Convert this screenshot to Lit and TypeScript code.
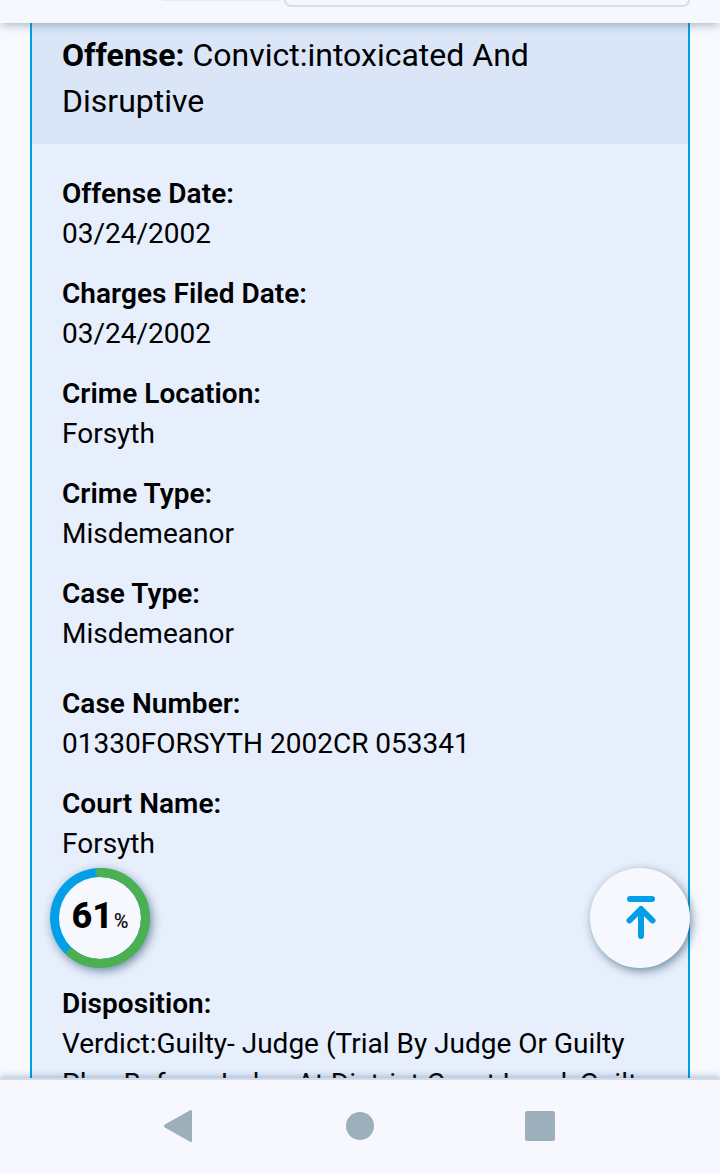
import { LitElement, html, css } from "lit";
import { customElement } from "lit/decorators.js";

interface Field {
  label: string;
  value: string;
  spacing?: "wide" | "section";
}

const FIELDS: Field[] = [
  { label: "Offense Date:", value: "03/24/2002" },
  { label: "Charges Filed Date:", value: "03/24/2002" },
  { label: "Crime Location:", value: "Forsyth" },
  { label: "Crime Type:", value: "Misdemeanor" },
  { label: "Case Type:", value: "Misdemeanor" },
  { label: "Case Number:", value: "01330FORSYTH 2002CR 053341", spacing: "wide" },
  { label: "Court Name:", value: "Forsyth" },
  {
    label: "Disposition:",
    value: "Verdict:Guilty- Judge (Trial By Judge Or Guilty Plea Before Judge At District Court Level, Guilty",
    spacing: "section",
  },
];

@customElement("offense-record")
class OffenseRecord extends LitElement {
  static styles = css`
    :host { display: block; margin: 0 30px; border: solid #009fe8; border-width: 0 2px; background: #e7eefc; color: #000; box-sizing: border-box; }
    .offense { background: #dae6f7; padding: 9px 120px 20px 30px; font-size: 32px; line-height: 46px; font-weight: 400; }
    .offense b { font-weight: 700; }
    .fields { padding: 30px 30px 0; display: flex; flex-direction: column; gap: 20px; font-size: 28px; line-height: 40px; }
    .wide { margin-top: 10px; }
    .section { margin-top: 100px; }
    .label { font-weight: 600; letter-spacing: 0.04px; }
    .value { font-weight: 400; }
  `;
  render() {
    return html`
      <div class="offense"><b>Offense:</b> Convict:intoxicated And Disruptive</div>
      <div class="fields">
        ${FIELDS.map(
          (f) => html`<div class=${f.spacing ?? "field"}>
            <div class="label">${f.label}</div>
            <div class="value">${f.value}</div>
          </div>`
        )}
      </div>
    `;
  }
}

@customElement("progress-badge")
class ProgressBadge extends LitElement {
  static styles = css`
    :host { display: grid; width: 100px; height: 100px; border-radius: 50%; box-shadow: 2px 3px 10px rgba(30, 75, 100, 0.6); }
    svg, .text { grid-area: 1 / 1; }
    .text { display: flex; align-items: baseline; justify-content: center; line-height: 96px; color: #000; }
    .number { font-size: 36px; font-weight: 800; }
    .percent { font-size: 19.5px; font-weight: 400; margin-left: 1px; -webkit-text-stroke: 0.2px #000; }
  `;
  render() {
    return html`
      <svg width="100" height="100" viewBox="0 0 100 100">
        <circle cx="50" cy="50" r="50" fill="#009fe8" />
        <circle cx="50" cy="50" r="41" fill="#f7f8fd" />
        <circle cx="50" cy="50" r="45.5" fill="none" stroke="#4caf50" stroke-width="9" stroke-linecap="round"
          pathLength="100" stroke-dasharray="61 100" transform="rotate(-90 50 50)" />
      </svg>
      <div class="text"><span class="number">61</span><span class="percent">%</span></div>
    `;
  }
}

@customElement("app-root")
class AppRoot extends LitElement {
  static styles = css`
    :host { display: flex; flex-direction: column; position: relative; width: 100%; height: 1174px; overflow: hidden; background: #f7f9fe; font-family: Roboto, sans-serif; }
    .top { flex: none; height: 23px; display: flex; align-items: flex-start; padding: 0 30px 0 162px; background: #f7f8fd; box-shadow: 0 4px 10px -2px rgba(50, 90, 115, 0.42); z-index: 2; box-sizing: border-box; }
    .tab { width: 118px; height: 1px; margin-right: 4px; background: #e3ebf8; }
    .input { flex: 1; height: 7px; border: 2px solid #d3dfef; border-top: 0; border-radius: 0 0 8px 8px; box-sizing: border-box; }
    .scroll { flex: 1; min-height: 0; overflow: hidden; }
    .nav { flex: none; height: 96px; display: flex; justify-content: center; background: #f7f8fd; border-top: 2px solid #d2ddec; box-shadow: 0 -1px 7px rgba(50, 90, 125, 0.42); box-sizing: border-box; z-index: 2; }
    .nav svg { display: block; width: 180px; height: 94px; fill: #9dafba; }
    .badge { position: absolute; left: 50px; top: 868px; }
    .up { position: absolute; left: 590px; top: 868px; width: 100px; height: 100px; padding: 0; border: 0; border-radius: 50%; background: #f7f8fd; box-shadow: 2px 3px 10px rgba(30, 75, 100, 0.6); }
    .up svg { display: block; fill: none; stroke: #009fe8; stroke-width: 6; stroke-linecap: round; stroke-linejoin: round; }
  `;
  render() {
    return html`
      <div class="top"><div class="tab"></div><div class="input"></div></div>
      <main class="scroll"><offense-record></offense-record></main>
      <progress-badge class="badge"></progress-badge>
      <button class="up" aria-label="Back to top">
        <svg width="100" height="100" viewBox="0 0 100 100"><path d="M40 31H62M51 68V41M39.500 52.500L51 41L62.500 52.500" /></svg>
      </button>
      <nav class="nav">
        <svg viewBox="0 0 180 94"><path d="M74.800 44.500L100 30.200Q102 29.300 102 31.500V60.500Q102 62.700 100 61.800L74.800 47.500Q73 46 74.800 44.500Z" /></svg>
        <svg viewBox="0 0 180 94"><circle cx="90" cy="46" r="14" /></svg>
        <svg viewBox="0 0 180 94"><rect x="75" y="31" width="30" height="30" rx="2.500" /></svg>
      </nav>
    `;
  }
}
